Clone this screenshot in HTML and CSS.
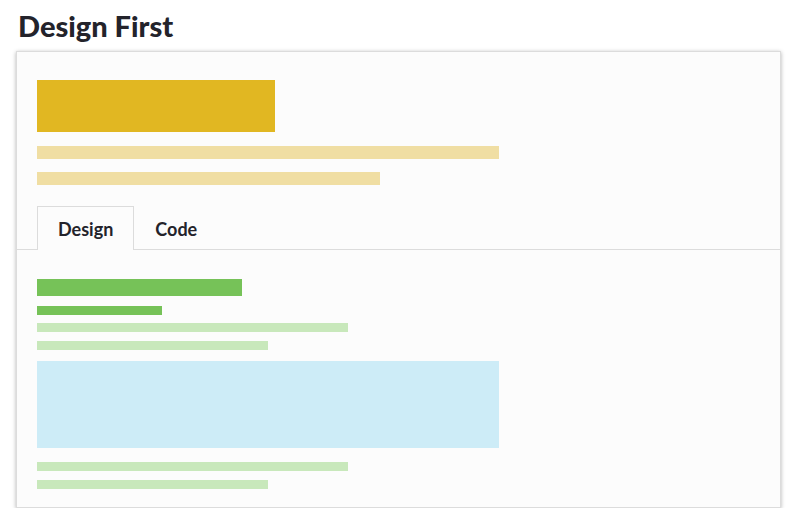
FILE: index.html
```html
<!DOCTYPE html>
<html>
<head>
<meta charset="utf-8">
<link rel="stylesheet" href="styles.css">
</head>
<body>
<div class="page">
  <h1 class="title">Design First</h1>
  <div class="card">
    <div class="header">
      <div class="bar hero"></div>
      <div class="bar sub sub-1"></div>
      <div class="bar sub sub-2"></div>
    </div>
    <div class="tabs">
      <div class="tab active">Design</div>
      <div class="tab">Code</div>
    </div>
    <div class="body">
      <div class="bar g-head"></div>
      <div class="bar g-sub"></div>
      <div class="bar g-line g-line-1"></div>
      <div class="bar g-line g-line-2"></div>
      <div class="bar media"></div>
      <div class="bar g-line g-line-3"></div>
      <div class="bar g-line g-line-4"></div>
    </div>
  </div>
</div>
</body>
</html>
```

FILE: styles.css
```css
* { box-sizing: border-box; }
html, body { margin: 0; padding: 0; background: #fff; }
body { font-family: Lato, "Noto Sans", sans-serif; color: #23232b; }

.page {
  width: 800px;
  padding: 0 19px 0 16px;
}

.title {
  margin: 0;
  padding-top: 8px;
  padding-left: 2px;
  height: 51px;
  font-size: 29px;
  font-weight: 900;
  line-height: 35px;
}

.card {
  background: #fcfcfc;
  border: 1px solid #dcdcdc;
  box-shadow: 0 1px 4px rgba(0,0,0,0.3);
  padding-bottom: 18px;
}

.header {
  padding: 28px 20px 0 20px;
  display: flex;
  flex-direction: column;
}

.bar { flex: none; }

.hero { width: 238px; height: 52px; background: #e1b722; }
.sub { height: 13px; background: #f0dea3; }
.sub-1 { width: 462px; margin-top: 14px; }
.sub-2 { width: 343px; margin-top: 13px; }

.tabs {
  margin-top: 21px;
  display: flex;
  border-bottom: 1px solid #dcdcdc;
  padding-left: 20px;
}

.tab {
  height: 43px;
  padding: 0 20px;
  font-size: 18px;
  font-weight: 700;
  line-height: 44px;
  border: 1px solid transparent;
  border-bottom: none;
}

.tab.active {
  border-color: #dcdcdc;
  background: #fcfcfc;
  margin-bottom: -1px;
  height: 44px;
}

.body {
  padding: 29px 20px 0 20px;
  display: flex;
  flex-direction: column;
}

.g-head { width: 205px; height: 17px; background: #76c258; }
.g-sub { width: 125px; height: 9px; margin-top: 10px; background: #76c258; }
.g-line { height: 9px; background: #c8e8bb; }
.g-line-1 { width: 311px; margin-top: 8px; }
.g-line-2 { width: 231px; margin-top: 9px; }
.media { width: 462px; height: 87px; margin-top: 11px; background: #cdecf7; }
.g-line-3 { width: 311px; margin-top: 14px; }
.g-line-4 { width: 231px; margin-top: 9px; }
```
